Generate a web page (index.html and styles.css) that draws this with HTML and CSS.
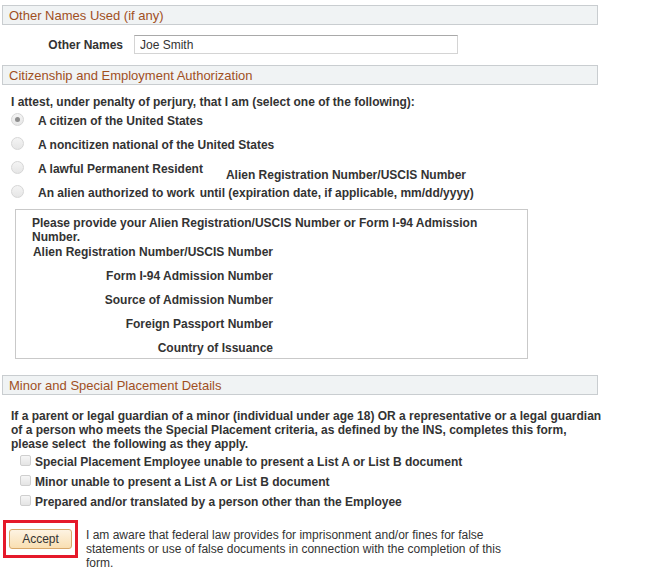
FILE: index.html
```html
<!DOCTYPE html>
<html lang="en">
	<head>
		<meta charset="utf-8" />
		<title>Employment Eligibility</title>
		<link rel="stylesheet" href="styles.css">
	</head>
	<body>
		<div class="page">
			<div class="group-head">Other Names Used (if any)</div>
			<div class="names-row">
				<label class="names-label" for="othernames">Other Names</label>
				<input class="text-input" id="othernames" type="text" value="Joe Smith">
			</div>

			<div class="group-head second">Citizenship and Employment Authorization</div>
			<p class="attest">I attest, under penalty of perjury, that I am (select one of the following):</p>
			<div class="radio-list">
				<div class="radio-row">
					<span class="radio checked"></span>
					<span class="radio-label">A citizen of the United States</span>
				</div>
				<div class="radio-row">
					<span class="radio"></span>
					<span class="radio-label">A noncitizen national of the United States</span>
				</div>
				<div class="radio-row">
					<span class="radio"></span>
					<span class="radio-label">A lawful Permanent Resident</span>
					<span class="alien-num">Alien Registration Number/USCIS Number</span>
				</div>
				<div class="radio-row">
					<span class="radio"></span>
					<span class="radio-label">An alien authorized to work</span>
					<span class="until">until (expiration date, if applicable, mm/dd/yyyy)</span>
				</div>
			</div>

			<div class="number-box">
				<p class="box-note">Please provide your Alien Registration/USCIS Number or Form I-94 Admission Number.</p>
				<div class="box-field first">Alien Registration Number/USCIS Number</div>
				<div class="box-field">Form I-94 Admission Number</div>
				<div class="box-field">Source of Admission Number</div>
				<div class="box-field">Foreign Passport Number</div>
				<div class="box-field">Country of Issuance</div>
			</div>

			<div class="group-head third">Minor and Special Placement Details</div>
			<p class="minor-note">If a parent or legal guardian of a minor (individual under age 18) OR a representative or a legal guardian of a person who meets the Special Placement criteria, as defined by the INS, completes this form, please select&nbsp; the following as they apply.</p>
			<div class="check-list">
				<div class="check-row"><span class="check"></span>Special Placement Employee unable to present a List A or List B document</div>
				<div class="check-row"><span class="check"></span>Minor unable to present a List A or List B document</div>
				<div class="check-row"><span class="check"></span>Prepared and/or translated by a person other than the Employee</div>
			</div>

			<div class="accept-row">
				<div class="highlight">
					<button class="accept-btn" type="button">Accept</button>
				</div>
				<p class="aware">I am aware that federal law provides for imprisonment and/or fines for false statements or use of false documents in connection with the completion of this form.</p>
			</div>
		</div>
	</body>
</html>
```

FILE: styles.css
```css
body {
	margin: 0;
	font-family: "Liberation Sans", Arial, sans-serif;
	font-size: 12px;
	color: #333;
	background: #fff;
}
p {
	margin: 0;
}
.page {
	padding-top: 5px;
	width: 645px;
}

/* group headers */
.group-head {
	margin-left: 2px;
	width: 588px;
	height: 17px;
	padding: 1px 0 0 6px;
	line-height: 18px;
	border: 1px solid #c9cdd0;
	background: #f0f3f4;
	color: #a0501f;
	font-size: 13px;
}
.group-head.second {
	margin-top: 11px;
}
.group-head.third {
	margin-top: 16px;
}

/* other names */
.names-row {
	display: flex;
	align-items: center;
	margin-top: 10px;
	height: 19px;
}
.names-label {
	width: 123px;
	text-align: right;
	font-weight: bold;
}
.text-input {
	box-sizing: border-box;
	margin: 0 0 0 11px;
	width: 324px;
	height: 19px;
	padding: 1px 5px 0;
	border: 1px solid #d4d4d4;
	border-top-color: #a9a9a9;
	font-family: inherit;
	font-size: 12px;
	color: #333;
}

/* citizenship */
.attest {
	margin: 10px 0 0 11px;
	line-height: 14px;
	font-weight: bold;
}
.radio-list {
	margin-left: 11px;
}
.radio-row {
	display: flex;
	align-items: center;
	height: 24px;
	font-weight: bold;
	white-space: nowrap;
}
.radio {
	box-sizing: border-box;
	width: 13px;
	height: 13px;
	margin: -3px 0 0 0;
	border: 1px solid #d6d6d6;
	border-radius: 50%;
	background: linear-gradient(#f4f4f4, #e6e6e6);
	display: flex;
	align-items: center;
	justify-content: center;
}
.radio.checked::after {
	content: "";
	width: 5px;
	height: 5px;
	border-radius: 50%;
	background: #8e8e8e;
}
.radio-label {
	margin-left: 14px;
}
.alien-num {
	align-self: flex-end;
	line-height: 12px;
	margin-left: 23px;
}
.until {
	margin-left: 5px;
}

.number-box {
	margin: 4px 0 0 15px;
	width: 495px;
	padding: 6px 0 2px 16px;
	border: 1px solid #c9c9c9;
	font-weight: bold;
}
.box-note {
	width: 460px;
	line-height: 14px;
}
.box-field {
	width: 241px;
	text-align: right;
	line-height: 16px;
	margin-top: 8px;
}
.box-field.first {
	margin-top: 0;
}

/* minor */
.minor-note {
	margin: 14px 0 0 11px;
	width: 593px;
	line-height: 14px;
	font-weight: bold;
}
.check-list {
	margin: 1px 0 0 20px;
}
.check-row {
	display: flex;
	align-items: center;
	height: 20px;
	font-weight: bold;
}
.check {
	box-sizing: border-box;
	width: 11px;
	height: 11px;
	margin: -3px 4px 0 0;
	border: 1px solid #cfcfcf;
	border-radius: 2px;
	background: linear-gradient(#f6f6f6, #e4e4e4);
}

/* accept */
.accept-row {
	display: flex;
	align-items: flex-start;
	margin: 8px 0 0 3px;
}
.highlight {
	padding: 6px 3px;
	border: 3px solid #e5192a;
}
.accept-btn {
	width: 63px;
	height: 20px;
	padding: 0;
	border: 1px solid #d8a86a;
	border-radius: 3px;
	background: linear-gradient(#fdf3e2, #f9dfb2);
	font-family: inherit;
	font-size: 12px;
	color: #333;
}
.aware {
	margin: 8px 0 0 8px;
	width: 425px;
	line-height: 14px;
}
```
